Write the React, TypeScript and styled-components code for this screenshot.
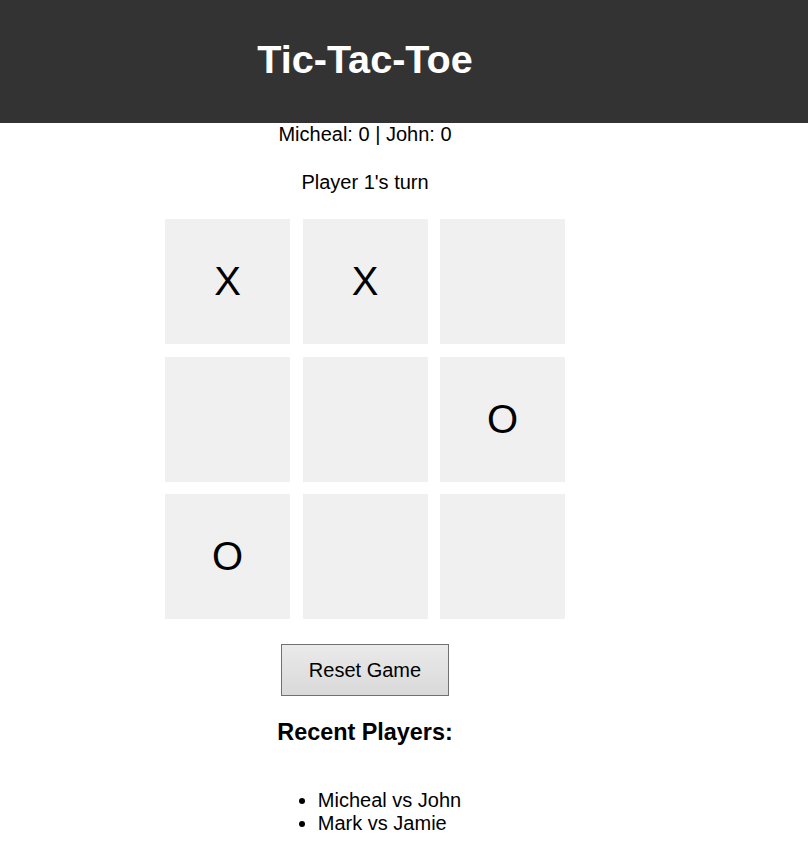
import React from "react";
import styled, { createGlobalStyle } from "styled-components";

const GlobalStyle = createGlobalStyle`
  html, body {
    margin: 0;
    padding: 0;
    background: #ffffff;
  }
  body {
    font-family: "Liberation Sans", Arial, sans-serif;
    color: #000000;
  }
`;

const Header = styled.header`
  background: #333333;
  height: 123px;
  display: flex;
  align-items: center;
`;

const Title = styled.h1`
  width: 730px;
  margin: 0;
  padding-bottom: 4px;
  text-align: center;
  color: #ffffff;
  font-size: 39.6px;
  font-weight: bold;
`;

const Main = styled.main`
  width: 730px;
  display: flex;
  flex-direction: column;
  align-items: center;
  text-align: center;
  font-size: 20px;
`;

const Score = styled.p`
  margin: 0 0 25px;
  line-height: 23px;
`;

const Turn = styled.p`
  margin: 0;
  line-height: 23px;
`;

const Board = styled.div`
  display: grid;
  grid-template-columns: repeat(3, 125px);
  grid-auto-rows: 125px;
  gap: 12.5px;
  margin: 25px 0;
`;

const Cell = styled.div`
  background: #f0f0f0;
  display: flex;
  align-items: center;
  justify-content: center;
  font-size: 40px;
  color: #000000;
`;

const ResetButton = styled.button`
  font-family: "Liberation Sans", Arial, sans-serif;
  font-size: 20px;
  line-height: 23px;
  color: #000000;
  padding: 13.5px 26.5px;
  border: 1px solid #707070;
  border-radius: 0;
  background: linear-gradient(#eaeaea, #d9d9d9);
  cursor: pointer;
`;

const RecentTitle = styled.h3`
  margin: 23px 0 23.4px;
  font-size: 23.4px;
  font-weight: bold;
`;

const RecentList = styled.ul`
  margin: 20px 0 0 9px;
  padding: 0 0 0 40px;
  text-align: left;
  line-height: 23px;
`;

const board = ["X", "X", "", "", "", "O", "O", "", ""];

export default function App() {
  return (
    <>
      <GlobalStyle />
      <Header>
        <Title>Tic-Tac-Toe</Title>
      </Header>
      <Main>
        <Score>Micheal: 0 | John: 0</Score>
        <Turn>Player 1's turn</Turn>
        <Board>
          {board.map((v, i) => (
            <Cell key={i}>{v}</Cell>
          ))}
        </Board>
        <ResetButton>Reset Game</ResetButton>
        <RecentTitle>Recent Players:</RecentTitle>
        <RecentList>
          <li>Micheal vs John</li>
          <li>Mark vs Jamie</li>
        </RecentList>
      </Main>
    </>
  );
}
